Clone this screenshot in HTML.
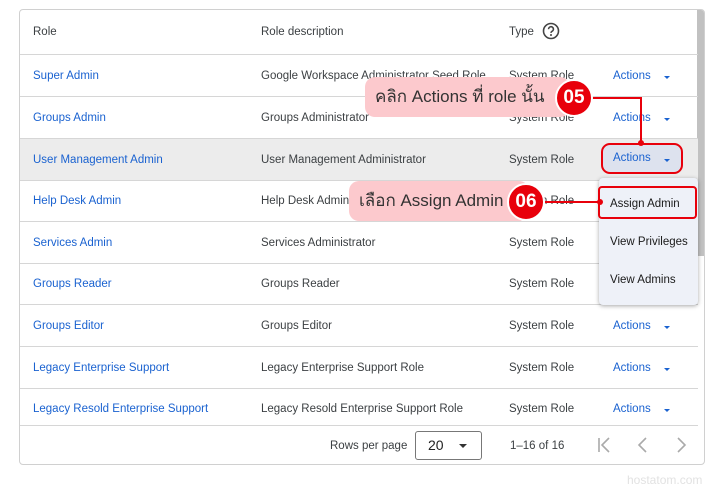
<!DOCTYPE html>
<html><head><meta charset="utf-8"><style>
*{margin:0;padding:0;box-sizing:border-box}
body{width:720px;height:489px;background:#fff;font-family:"Liberation Sans",sans-serif;font-size:11.5px;color:#3c4043;position:relative;overflow:hidden}
.box{position:absolute;left:19px;top:9px;width:686px;height:456px;border:1px solid #d0d0d0;border-radius:4px;overflow:hidden}
.sb{position:absolute;right:0;top:0;width:7px;height:246px;background:#c1c1c1}
.row{position:absolute;left:0;width:678px;border-bottom:1px solid #d6d6d6}
.t{position:absolute;white-space:nowrap}
.row span.t{margin-top:1px}
.role{left:13px;color:#1a62d0}
.act{left:593px;color:#1a62d0}
.car{position:absolute;left:644px;width:0;height:0;border-left:3px solid transparent;border-right:3px solid transparent;border-top:3px solid #1a62d0}
.foot{position:absolute;left:0;top:415px;width:678px;height:40px}
.pill{position:absolute;background:#fcc9cd;border-radius:10px;font-family:"Liberation Sans","Noto Sans CJK SC",sans-serif;font-size:17px;color:#333;padding-left:10px;line-height:40px;height:40px}
.num{position:absolute;width:38px;height:38px;border-radius:50%;background:#e8000b;border:2px solid #fff;color:#fff;font-weight:bold;font-size:19px;text-align:center;line-height:34px}
.menu{position:absolute;left:599px;top:178px;width:99px;height:127px;background:#eef1f8;border-radius:4px;box-shadow:0 1px 4px rgba(0,0,0,.35)}
.menu div{position:absolute;left:11px;font-size:11.5px;color:#1a1a1a}
</style></head><body>
<div class="box">
<div class="sb"></div>
<div class="row" style="top:0;height:45px"><span class="t" style="left:13px;top:15px">Role</span><span class="t" style="left:241px;top:15px">Role description</span><span class="t" style="left:489px;top:15px">Type</span>
<svg style="position:absolute;left:522px;top:12px" width="18" height="18" viewBox="0 0 18 18"><circle cx="9" cy="9" r="7.5" fill="none" stroke="#444" stroke-width="1.6"/><path d="M6.6 7.2a2.4 2.4 0 1 1 3.4 2.1c-.7.4-1 .8-1 1.6" fill="none" stroke="#444" stroke-width="1.6"/><circle cx="9" cy="13" r="1" fill="#444"/></svg></div>
<div class="row" style="top:45px;height:42px"><span class="t role" style="top:14px">Super Admin</span><span class="t" style="left:241px;top:14px">Google Workspace Administrator Seed Role</span><span class="t" style="left:489px;top:14px">System Role</span><span class="t act" style="top:14px">Actions</span><i class="car" style="top:21px"></i></div>
<div class="row" style="top:87px;height:42px"><span class="t role" style="top:14px">Groups Admin</span><span class="t" style="left:241px;top:14px">Groups Administrator</span><span class="t" style="left:489px;top:14px">System Role</span><span class="t act" style="top:14px">Actions</span><i class="car" style="top:21px"></i></div>
<div class="row" style="top:129px;height:42px;background:#ececec"><span class="t role" style="top:14px">User Management Admin</span><span class="t" style="left:241px;top:14px">User Management Administrator</span><span class="t" style="left:489px;top:14px">System Role</span></div>
<div class="row" style="top:171px;height:41px"><span class="t role" style="top:13px">Help Desk Admin</span><span class="t" style="left:241px;top:13px">Help Desk Administrator</span><span class="t" style="left:489px;top:13px">System Role</span></div>
<div class="row" style="top:212px;height:42px"><span class="t role" style="top:14px">Services Admin</span><span class="t" style="left:241px;top:14px">Services Administrator</span><span class="t" style="left:489px;top:14px">System Role</span></div>
<div class="row" style="top:254px;height:41px"><span class="t role" style="top:13px">Groups Reader</span><span class="t" style="left:241px;top:13px">Groups Reader</span><span class="t" style="left:489px;top:13px">System Role</span></div>
<div class="row" style="top:295px;height:42px"><span class="t role" style="top:14px">Groups Editor</span><span class="t" style="left:241px;top:14px">Groups Editor</span><span class="t" style="left:489px;top:14px">System Role</span><span class="t act" style="top:14px">Actions</span><i class="car" style="top:21px"></i></div>
<div class="row" style="top:337px;height:42px"><span class="t role" style="top:14px">Legacy Enterprise Support</span><span class="t" style="left:241px;top:14px">Legacy Enterprise Support Role</span><span class="t" style="left:489px;top:14px">System Role</span><span class="t act" style="top:14px">Actions</span><i class="car" style="top:21px"></i></div>
<div class="row" style="top:379px;height:37px"><span class="t role" style="top:13px">Legacy Resold Enterprise Support</span><span class="t" style="left:241px;top:13px">Legacy Resold Enterprise Support Role</span><span class="t" style="left:489px;top:13px">System Role</span><span class="t act" style="top:13px">Actions</span><i class="car" style="top:20px"></i></div>
<div class="foot">
<span class="t" style="left:310px;top:15px">Rows per page</span>
<div style="position:absolute;left:395px;top:6px;width:67px;height:29px;border:1px solid #777;border-radius:3px"><span class="t" style="left:12px;top:5px;font-size:14px;color:#222">20</span><i style="position:absolute;left:43px;top:12px;border-left:4px solid transparent;border-right:4px solid transparent;border-top:4px solid #333"></i></div>
<span class="t" style="left:490px;top:15px">1–16 of 16</span>
<svg style="position:absolute;left:574px;top:11px" width="100" height="18" viewBox="0 0 100 18"><g fill="none" stroke="#aaa" stroke-width="1.6"><path d="M5 2v14M15 2l-7 7 7 7"/><path d="M52 2l-7 7 7 7"/><path d="M84 2l7 7-7 7"/></g></svg>
</div>
</div>
<div style="position:absolute;left:601px;top:143px;width:82px;height:31px;border:2px solid #e8000b;border-radius:9px;background:#dde2ee"></div>
<span class="t" style="left:613px;top:152px;color:#1a62d0">Actions</span><i class="car" style="left:664px;top:159px"></i>
<div class="menu"><div style="top:20px">Assign Admin</div><div style="top:58px">View Privileges</div><div style="top:96px">View Admins</div></div>
<div style="position:absolute;left:598px;top:186px;width:99px;height:33px;border:2px solid #e8000b;border-radius:4px"></div>
<div class="pill" style="left:365px;top:77px;width:205px">คลิก Actions ที่ role นั้น</div>
<div style="position:absolute;left:592px;top:97px;width:50px;height:2px;background:#e8000b"></div>
<div style="position:absolute;left:640px;top:97px;width:2px;height:46px;background:#e8000b"></div>
<div style="position:absolute;left:638px;top:140px;width:6px;height:6px;border-radius:50%;background:#e8000b"></div>
<div class="num" style="left:555px;top:79px">05</div>
<div class="pill" style="left:349px;top:181px;width:180px">เลือก Assign Admin</div>
<div style="position:absolute;left:545px;top:201px;width:56px;height:2px;background:#e8000b"></div>
<div style="position:absolute;left:597px;top:199px;width:6px;height:6px;border-radius:50%;background:#e8000b"></div>
<div class="num" style="left:507px;top:183px">06</div>
<span class="t" style="left:627px;top:473px;color:#e2e2e2;font-size:12px">hostatom.com</span>
</body></html>
